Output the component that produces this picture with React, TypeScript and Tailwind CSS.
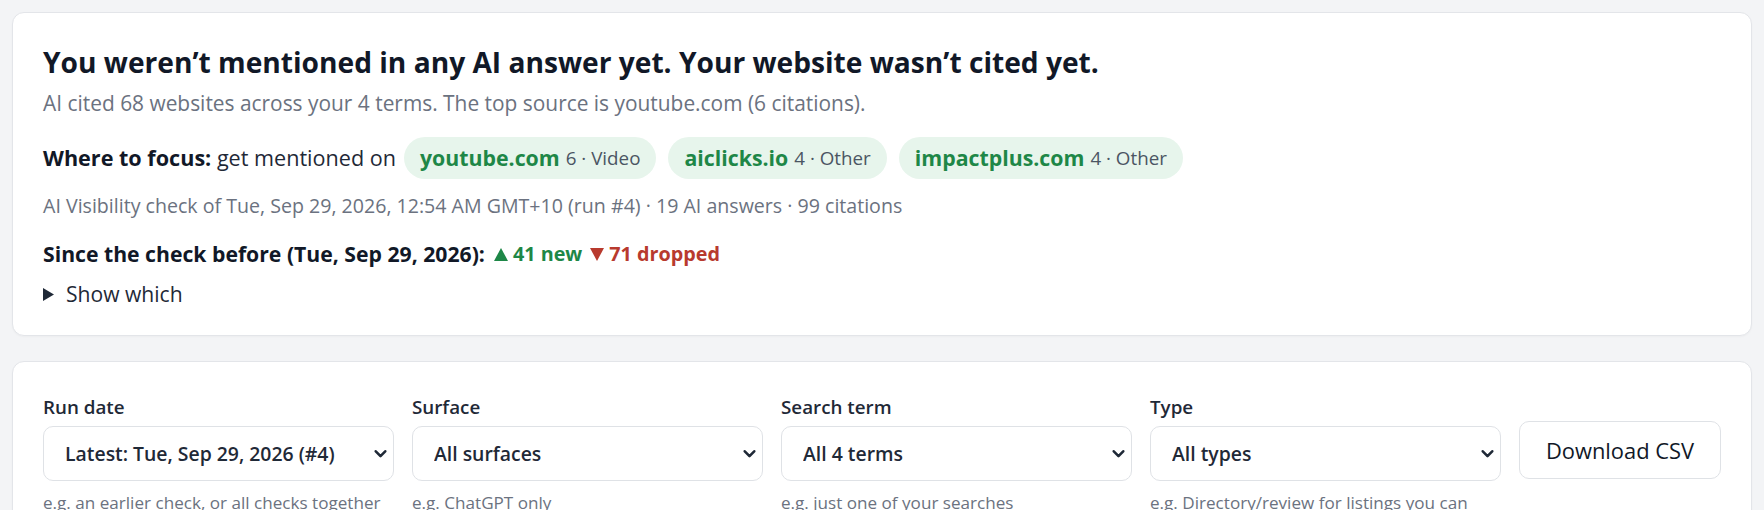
import React from "react";

function Pill({ domain, count, kind }: { domain: string; count: number; kind: string }) {
  return (
    <span className="inline-flex h-[42px] items-center rounded-full bg-[#e7f5ec] px-[16px] leading-none">
      <span className="text-[21.3px] font-bold text-[#1e8747]">{domain}</span>
      <span className="ml-[6px] text-[18.8px] text-[#4b5563]">
        {count} · {kind}
      </span>
    </span>
  );
}

function Chevron() {
  return (
    <svg
      className="pointer-events-none absolute right-[7px] top-1/2 -translate-y-1/2"
      width="13"
      height="9"
      viewBox="0 0 13 9"
      fill="none"
    >
      <path d="M1.8 1.8 L6.5 6.6 L11.2 1.8" stroke="#1f2937" strokeWidth="2.6" strokeLinecap="round" strokeLinejoin="round" />
    </svg>
  );
}

function Field({ label, value, help }: { label: string; value: string; help: string }) {
  return (
    <div className="flex min-w-0 flex-col">
      <label className="text-[18.8px] font-semibold leading-[30px] text-[#1f2937]">{label}</label>
      <div className="relative mt-[4px]">
        <select
          className="h-[55px] w-full appearance-none rounded-[10px] border border-[#dfe2e6] bg-white pl-[21px] pr-[30px] text-[19.4px] font-semibold text-[#1f2937] outline-none"
          defaultValue={value}
        >
          <option value={value}>{value}</option>
        </select>
        <Chevron />
      </div>
      <p className="mt-[9px] text-[17.1px] leading-[25px] text-[#6b7280]">{help}</p>
    </div>
  );
}

export default function App() {
  return (
    <div className="min-h-screen bg-[#f3f4f6] p-3 font-['Open_Sans',sans-serif] text-[#1f2937]">
      <section className="rounded-xl border border-[#e3e5e9] bg-white px-[30px] pb-[26px] pt-[30px] shadow-[0_1px_2px_rgba(0,0,0,0.03)]">
        <h2 className="text-[28.15px] font-bold leading-[38px] text-[#111827]">
          You weren’t mentioned in any AI answer yet. Your website wasn’t cited yet.
        </h2>
        <p className="mt-[7px] text-[20.9px] leading-[30px] text-[#6b7280]">
          AI cited 68 websites across your 4 terms. The top source is youtube.com (6 citations).
        </p>
        <div className="mt-[19px] flex flex-wrap items-center gap-[12px] text-[21.6px] leading-[30px]">
          <span className="mr-[-4px]">
            <span className="font-bold text-[#111827]">Where to focus:</span> get mentioned on
          </span>
          <Pill domain="youtube.com" count={6} kind="Video" />
          <Pill domain="aiclicks.io" count={4} kind="Other" />
          <Pill domain="impactplus.com" count={4} kind="Other" />
        </div>
        <p className="mt-[13px] text-[19.6px] leading-[27px] text-[#6b7280]">
          AI Visibility check of Tue, Sep 29, 2026, 12:54 AM GMT+10 (run #4) · 19 AI answers · 99 citations
        </p>
        <p className="mt-[20px] flex items-center text-[21.2px] font-bold leading-[30px] text-[#111827]">
          <span>Since the check before (Tue, Sep 29, 2026):</span>
          <span className="ml-[9px] inline-flex items-center text-[19.8px] text-[#1e8747]">
            <svg width="14" height="13" viewBox="0 0 14 13" className="mr-[5px]">
              <polygon points="7,0 14,13 0,13" fill="#1e8747" />
            </svg>
            41 new
          </span>
          <span className="ml-[8px] inline-flex items-center text-[19.8px] text-[#b83a2e]">
            <svg width="14" height="13" viewBox="0 0 14 13" className="mr-[5px]">
              <polygon points="0,0 14,0 7,13" fill="#b83a2e" />
            </svg>
            71 dropped
          </span>
        </p>
        <div className="mt-[10px] flex items-center text-[21.1px] leading-[30px] text-[#1f2937]">
          <svg width="11" height="13" viewBox="0 0 11 13" className="mr-[12px]">
            <polygon points="0,0 11,6.5 0,13" fill="#1f2937" />
          </svg>
          <span>Show which</span>
        </div>
      </section>

      <section className="mt-[25px] rounded-xl border border-[#e3e5e9] bg-white p-[30px] shadow-[0_1px_2px_rgba(0,0,0,0.03)]">
        <div className="grid grid-cols-[1fr_1fr_1fr_1fr_auto] items-start gap-[18px]">
          <Field label="Run date" value="Latest: Tue, Sep 29, 2026 (#4)" help="e.g. an earlier check, or all checks together" />
          <Field label="Surface" value="All surfaces" help="e.g. ChatGPT only" />
          <Field label="Search term" value="All 4 terms" help="e.g. just one of your searches" />
          <Field
            label="Type"
            value="All types"
            help="e.g. Directory/review for listings you can claim or improve"
          />
          <button className="mt-[29px] h-[58px] w-[202px] rounded-[10px] border border-[#dfe2e6] bg-white pt-[2px] text-[21.9px] font-medium text-[#111827]">
            Download CSV
          </button>
        </div>
      </section>
    </div>
  );
}
